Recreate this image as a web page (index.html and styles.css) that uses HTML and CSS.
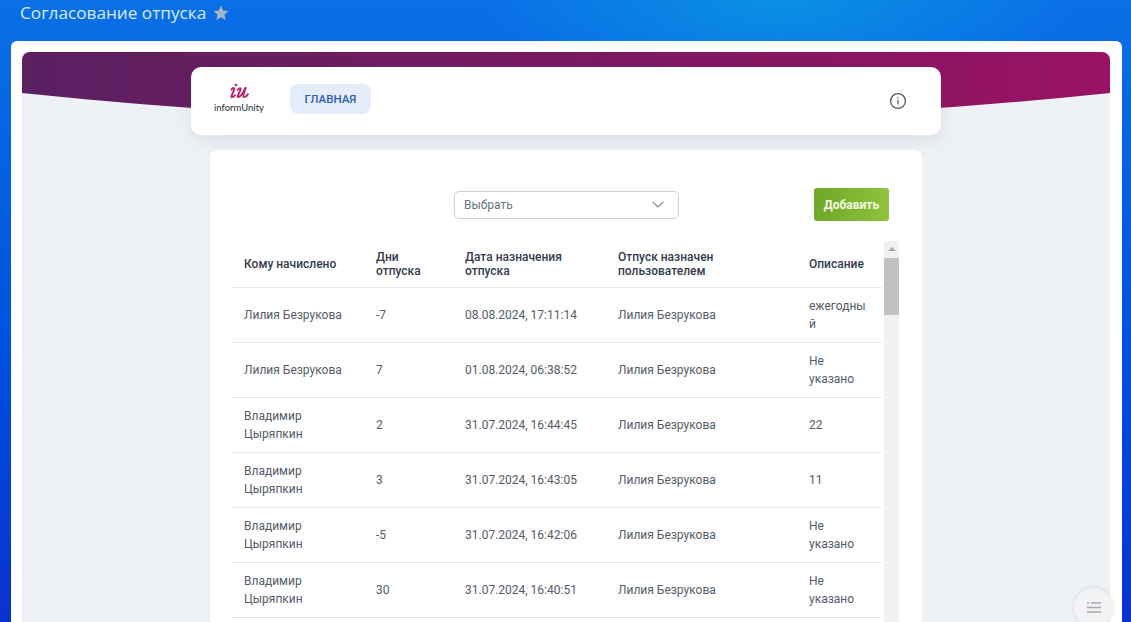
FILE: index.html
```html
<!DOCTYPE html>
<html lang="ru">
<head>
<meta charset="utf-8">
<title>Согласование отпуска</title>
<link rel="stylesheet" href="styles.css">
</head>
<body>
<header class="title-bar">
  <h1 class="title">Согласование отпуска</h1>
  <svg class="star" viewBox="0 0 16 16" aria-hidden="true"><path d="M8 .6l2.2 4.9 5.3.6-4 3.6 1.1 5.3L8 12.3l-4.6 2.7 1.1-5.3-4-3.6 5.3-.6z"/></svg>
</header>
<div class="panel">
  <div class="canvas">
    <svg class="banner" viewBox="0 0 1088 70" preserveAspectRatio="none" aria-hidden="true">
      <defs><linearGradient id="bannerFill" x1="0" x2="1" y1="0" y2="0"><stop offset="0" stop-color="#5a2061"/><stop offset="1" stop-color="#9a1264"/></linearGradient></defs>
      <path d="M0 41Q544 98 1088 41V0H0Z" fill="url(#bannerFill)"/>
    </svg>
    <nav class="nav-card">
      <div class="logo">
        <svg class="logo-mark" viewBox="0 0 23 16" aria-hidden="true">
          <path class="logo-dot" d="M7.6 0.4l2.2 1.3-1.7 1.7-1.9-1.3z"/>
          <path class="logo-stroke" d="M3.4 6.6C5 4.6 6.6 4.6 6.3 6.3 5.8 8.6 3.4 12 3.4 13.6c0 1.5 2.4 0 3.6-1.4"/>
          <path class="logo-stroke" d="M9.6 7C11.4 4.6 13 4.6 12.6 6.4 12 8.6 9.6 12 9.8 13.6c.2 1.5 3-.6 4.6-3.2L17.6 5"/>
          <path class="logo-stroke" d="M17.6 5C16.6 8 15 12 15.4 13.6c.4 1.4 3-.2 4.6-2.4"/>
        </svg>
        <span class="logo-name">informUnity</span>
      </div>
      <a class="nav-button">ГЛАВНАЯ</a>
      <svg class="info" viewBox="0 0 18 18" aria-hidden="true"><circle cx="9" cy="9" r="7.4"/><path d="M9 8v4.6M9 5.2v1.4"/></svg>
    </nav>
    <main class="card">
      <div class="toolbar">
        <div class="select">
          <span>Выбрать</span>
          <svg class="chevron" viewBox="0 0 12 7" aria-hidden="true"><path d="M.6.8L6 6l5.4-5.2"/></svg>
        </div>
        <button class="add">Добавить</button>
      </div>
      <div class="table-wrap">
        <table class="grid">
          <colgroup><col class="c1"><col class="c2"><col class="c3"><col class="c4"><col class="c5"></colgroup>
          <thead>
            <tr><th>Кому начислено</th><th>Дни отпуска</th><th>Дата назначения отпуска</th><th>Отпуск назначен пользователем</th><th>Описание</th></tr>
          </thead>
          <tbody>
            <tr><td>Лилия Безрукова</td><td>-7</td><td>08.08.2024, 17:11:14</td><td>Лилия Безрукова</td><td>ежегодны<br>й</td></tr>
            <tr><td>Лилия Безрукова</td><td>7</td><td>01.08.2024, 06:38:52</td><td>Лилия Безрукова</td><td>Не<br>указано</td></tr>
            <tr><td>Владимир<br>Цыряпкин</td><td>2</td><td>31.07.2024, 16:44:45</td><td>Лилия Безрукова</td><td>22</td></tr>
            <tr><td>Владимир<br>Цыряпкин</td><td>3</td><td>31.07.2024, 16:43:05</td><td>Лилия Безрукова</td><td>11</td></tr>
            <tr><td>Владимир<br>Цыряпкин</td><td>-5</td><td>31.07.2024, 16:42:06</td><td>Лилия Безрукова</td><td>Не<br>указано</td></tr>
            <tr><td>Владимир<br>Цыряпкин</td><td>30</td><td>31.07.2024, 16:40:51</td><td>Лилия Безрукова</td><td>Не<br>указано</td></tr>
          </tbody>
        </table>
        <div class="scrollbar">
          <div class="scroll-up"></div>
          <div class="scroll-thumb"></div>
        </div>
      </div>
    </main>
  </div>
</div>
<button class="fab" aria-label="Меню">
  <svg viewBox="0 0 14 11" aria-hidden="true"><path d="M0 1h2M4 1h10M0 5.5h14M0 10h14"/></svg>
</button>
</body>
</html>
```
FILE: styles.css
```css
html, body {
  margin: 0;
  height: 622px;
  overflow: hidden;
}
body {
  position: relative;
  font-family: Roboto, "Liberation Sans", sans-serif;
  background:
    radial-gradient(ellipse 300px 110px at 780px 0, #0a90e4 0%, rgba(10,144,228,0) 100%),
    linear-gradient(180deg, #0a70e6 0%, #0052dc 55%, #0a32cc 100%);
}
.title-bar {
  height: 41px;
  box-sizing: border-box;
  padding: 0 0 16px 20px;
  display: flex;
  align-items: center;
  gap: 7px;
}
.title {
  margin: 0;
  font: 400 17.2px/25px "Open Sans", sans-serif;
  color: #d8ecfb;
}
.star {
  width: 16px;
  height: 16px;
  fill: #a5b6cc;
}
.panel {
  margin: 0 9px 0 11px;
  padding: 11px 12px 11px 11px;
  height: 640px;
  background: #fff;
  border-radius: 6px 6px 0 0;
}
.canvas {
  position: relative;
  height: 100%;
  padding-top: 15px;
  box-sizing: border-box;
  background: #eef1f5;
  border-radius: 8px 8px 0 0;
  overflow: hidden;
  display: flex;
  flex-direction: column;
  align-items: center;
  gap: 15px;
}
.banner {
  position: absolute;
  top: 0;
  left: 0;
  width: 100%;
  height: 70px;
}
.nav-card {
  position: relative;
  flex: none;
  width: 750px;
  height: 68px;
  box-sizing: border-box;
  padding: 0 34px 0 22px;
  background: #fff;
  border-radius: 10px;
  box-shadow: 0 6px 18px rgba(70, 90, 130, .1);
  display: flex;
  align-items: center;
}
.logo {
  width: 52px;
  display: flex;
  flex-direction: column;
  align-items: center;
  gap: 3px;
  margin-top: -5px;
}
.logo-mark {
  width: 23px;
  height: 16px;
}
.logo-dot {
  fill: #b8236e;
}
.logo-stroke {
  fill: none;
  stroke: #b8236e;
  stroke-width: 1.9;
  stroke-linecap: round;
}
.logo-name {
  font: 400 9.5px/12px Lato, sans-serif;
  color: #2b2f36;
  white-space: nowrap;
}
.nav-button {
  margin-left: 25px;
  margin-top: -4px;
  width: 81px;
  height: 30px;
  background: #e5edfa;
  border-radius: 8px;
  display: flex;
  align-items: center;
  justify-content: center;
  font-size: 11.5px;
  font-weight: 500;
  color: #2a5cb4;
}
.info {
  margin-left: auto;
  margin-top: -1px;
  width: 18px;
  height: 18px;
  fill: none;
  stroke: #555c66;
  stroke-width: 1.3;
}
.card {
  position: relative;
  flex: none;
  width: 712px;
  height: 500px;
  box-sizing: border-box;
  padding: 38px 23px 0 22px;
  background: #fff;
  border-radius: 8px;
}
.toolbar {
  height: 33px;
  padding-right: 10px;
  display: flex;
  align-items: center;
  justify-content: flex-end;
}
.select {
  width: 225px;
  height: 28px;
  box-sizing: border-box;
  margin-right: 135px;
  padding: 0 14px 0 9px;
  border: 1px solid #c8d0da;
  border-radius: 5px;
  display: flex;
  align-items: center;
  justify-content: space-between;
  font-size: 12px;
  color: #6a737f;
}
.chevron {
  width: 12px;
  height: 7px;
  fill: none;
  stroke: #7d8792;
  stroke-width: 1.1;
}
.add {
  width: 75px;
  height: 33px;
  padding: 0;
  border: 0;
  border-radius: 3px;
  background: linear-gradient(90deg, #6fa727, #8fc33d);
  font: 700 12px Roboto, sans-serif;
  color: #f4fbe6;
}
.table-wrap {
  margin-top: 20px;
  display: flex;
  gap: 2px;
  align-items: stretch;
}
.grid {
  flex: none;
  width: 650px;
  table-layout: fixed;
  border-collapse: collapse;
  align-self: flex-start;
}
.c1 { width: 132px; }
.c2 { width: 89px; }
.c3 { width: 153px; }
.c4 { width: 191px; }
.c5 { width: 85px; }
.grid th {
  height: 46px;
  padding: 0 12px;
  box-sizing: border-box;
  text-align: left;
  font-size: 12px;
  font-weight: 500;
  line-height: 14px;
  color: #333c4c;
  border-bottom: 1px solid #e4e8ec;
}
.grid td {
  height: 55px;
  padding: 0 12px;
  box-sizing: border-box;
  font-size: 12px;
  line-height: 18px;
  color: #535c68;
  border-bottom: 1px solid #e4e8ec;
}
.scrollbar {
  flex: none;
  width: 15px;
  background: #f1f1f1;
  display: flex;
  flex-direction: column;
  min-height: 400px;
}
.scroll-up {
  height: 17px;
  position: relative;
}
.scroll-up::after {
  content: "";
  position: absolute;
  left: 4px;
  top: 6px;
  border: 4px solid transparent;
  border-top: 0;
  border-bottom: 4px solid #a9a9a9;
}
.scroll-thumb {
  height: 57px;
  background: #c1c1c1;
}
.fab {
  position: absolute;
  left: 1074px;
  top: 588px;
  width: 39px;
  height: 39px;
  padding: 0;
  border: 0;
  border-radius: 50%;
  background: #f1f3f5;
  box-shadow: 0 0 4px rgba(90, 100, 120, .2);
  display: flex;
  align-items: center;
  justify-content: center;
}
.fab svg {
  width: 14px;
  height: 11px;
  fill: none;
  stroke: #a6a9ad;
  stroke-width: 1.6;
}
```
